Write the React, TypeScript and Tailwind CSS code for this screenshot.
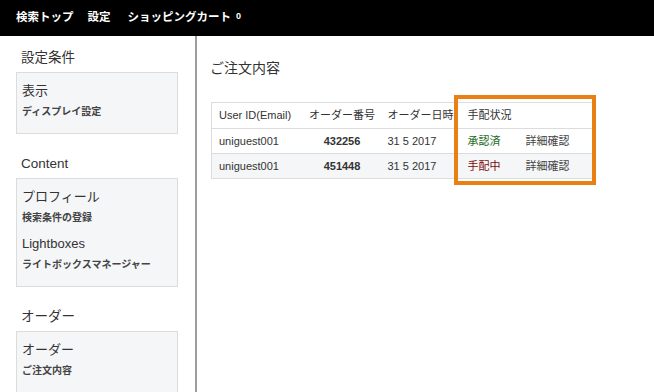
import React from 'react';

const font = { fontFamily: '"Liberation Sans", "Noto Sans CJK JP", sans-serif' };

interface NavItem {
  title: string;
  sub: string;
}

interface NavGroup {
  heading: string;
  items: NavItem[];
}

const groups: NavGroup[] = [
  { heading: '設定条件', items: [{ title: '表示', sub: 'ディスプレイ設定' }] },
  {
    heading: 'Content',
    items: [
      { title: 'プロフィール', sub: '検索条件の登録' },
      { title: 'Lightboxes', sub: 'ライトボックスマネージャー' },
    ],
  },
  { heading: 'オーダー', items: [{ title: 'オーダー', sub: 'ご注文内容' }] },
];

const orders = [
  { user: 'uniguest001', no: '432256', date: '31 5 2017', status: '承認済', ok: true },
  { user: 'uniguest001', no: '451448', date: '31 5 2017', status: '手配中', ok: false },
];

export default function App() {
  return (
    <div className="w-[654px] h-[392px] overflow-hidden bg-white text-[#333]" style={font}>
      {/* top nav */}
      <div className="h-[36px] bg-black flex items-center pl-[16px] text-white text-[11.5px] font-bold">
        <span>検索トップ</span>
        <span className="ml-[14px]">設定</span>
        <span className="ml-[17px]">ショッピングカート</span>
        <span className="ml-[5px] text-[9px] -mt-[3px]">0</span>
      </div>

      <div className="flex h-[356px]">
        {/* sidebar */}
        <div className="w-[197px] shrink-0 border-r-2 border-[#9e9e9e] pl-[16px] pr-[17px]">
          {groups.map((g, i) => (
            <div key={g.heading} className={i === 0 ? 'pt-[13px]' : 'pt-[21px]'}>
              <div className="pl-[5px] text-[13.5px] leading-[18px] mb-[5px]">{g.heading}</div>
              <div className="bg-[#f5f6f8] border border-[#dcdcdc] pl-[5px] pt-[9px] pb-[14px]">
                {g.items.map((it, j) => (
                  <div key={it.title} className={j > 0 ? 'mt-[10px]' : ''}>
                    <div className="text-[13px] leading-[18px]">{it.title}</div>
                    <div className="text-[10px] leading-[14px] mt-[5px] font-semibold text-[#444]">{it.sub}</div>
                  </div>
                ))}
              </div>
            </div>
          ))}
        </div>

        {/* main */}
        <div className="flex-1 pl-[14px] pt-[22px]">
          <div className="text-[14px] leading-[20px] -ml-[1px]">ご注文内容</div>
          <div className="mt-[24px] relative w-[382px]">
            <table className="w-[382px] border border-[#dcdcdc] border-collapse text-[11px]">
              <thead>
                <tr className="h-[26px]">
                  <th className="font-normal text-left pl-[7px] w-[90px]">User ID(Email)</th>
                  <th className="font-normal text-center w-[81px]">オーダー番号</th>
                  <th className="font-normal text-left pl-[5px] w-[75px]">オーダー日時</th>
                  <th className="font-normal text-left pl-[10px] w-[68px]">手配状況</th>
                  <th className="font-normal"></th>
                </tr>
              </thead>
              <tbody>
                {orders.map((o, i) => (
                  <tr key={o.no} className={`h-[25px] border-t border-[#dcdcdc] ${i % 2 === 1 ? 'bg-[#f5f6f8]' : ''}`}>
                    <td className="pl-[7px]">{o.user}</td>
                    <td className="text-center font-bold">{o.no}</td>
                    <td className="pl-[5px]">{o.date}</td>
                    <td className={`pl-[10px] ${o.ok ? 'text-[#1a6b1a]' : 'text-[#7d0a0a]'}`}>{o.status}</td>
                    <td className="text-[#444]">詳細確認</td>
                  </tr>
                ))}
              </tbody>
            </table>
            {/* highlight box */}
            <div className="absolute left-[243px] -top-[7px] w-[142px] h-[90px] border-[4px] border-[#e98015] pointer-events-none" />
          </div>
        </div>
      </div>
    </div>
  );
}
